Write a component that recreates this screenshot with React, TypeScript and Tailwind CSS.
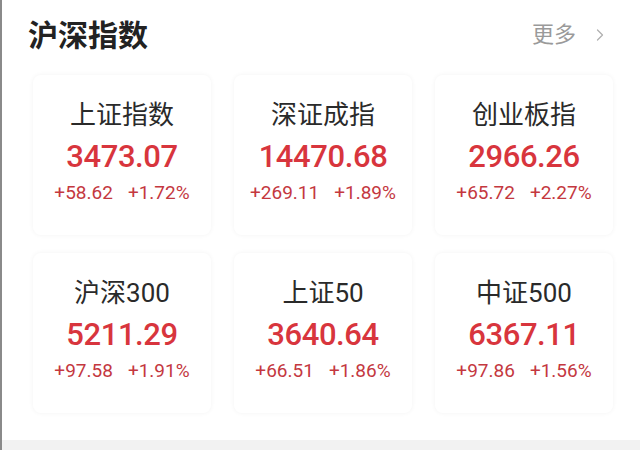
import { ChevronRight } from 'lucide-react'

interface IndexItem {
  name: string
  price: string
  change: string
  percent: string
}

const INDICES: IndexItem[] = [
  { name: '上证指数', price: '3473.07', change: '+58.62', percent: '+1.72%' },
  { name: '深证成指', price: '14470.68', change: '+269.11', percent: '+1.89%' },
  { name: '创业板指', price: '2966.26', change: '+65.72', percent: '+2.27%' },
  { name: '沪深300', price: '5211.29', change: '+97.58', percent: '+1.91%' },
  { name: '上证50', price: '3640.64', change: '+66.51', percent: '+1.86%' },
  { name: '中证500', price: '6367.11', change: '+97.86', percent: '+1.56%' },
]

const FONT = "font-['Roboto','Noto_Sans_CJK_SC',sans-serif]"

export default function App() {
  return (
    <div className={`w-[640px] h-[450px] bg-white flex flex-col overflow-hidden border-l-2 border-[#8a8a8a] ${FONT}`}>
      {/* Header */}
      <div className="h-[75px] flex items-center justify-between pl-[26px] pr-[30px] shrink-0">
        <h1 className="text-[30px] leading-[36px] font-bold text-[#222] -mt-[3px]">沪深指数</h1>
        <div className="flex items-center gap-[14px] text-[#9a9a9a] -mt-[6px]">
          <span className="text-[22px] leading-[28px]">更多</span>
          <ChevronRight className="h-[20px] w-[20px] text-[#b0b0b0]" strokeWidth={1.5} />
        </div>
      </div>

      {/* Index cards */}
      <div className="grid grid-cols-3 gap-x-[23px] gap-y-[18px] pl-[31px] pr-[27px]">
        {INDICES.map((item) => (
          <div
            key={item.name}
            className="h-[160px] rounded-lg bg-white shadow-[0_0_5px_rgba(0,0,0,0.05)] flex flex-col items-center pt-[25px]"
          >
            <p className="text-[26px] leading-[30px] text-[#2a2a2a]">{item.name}</p>
            <p className="mt-[8px] text-[31px] leading-[38px] font-medium tracking-[-0.4px] text-[#d8353d]">{item.price}</p>
            <div className="mt-[5px] flex items-center gap-[15px] text-[19px] leading-[24px] text-[#c4383f]">
              <span>{item.change}</span>
              <span>{item.percent}</span>
            </div>
          </div>
        ))}
      </div>

      <div className="flex-1" />
      <div className="h-[10px] bg-[#f2f2f2] shrink-0" />
    </div>
  )
}
